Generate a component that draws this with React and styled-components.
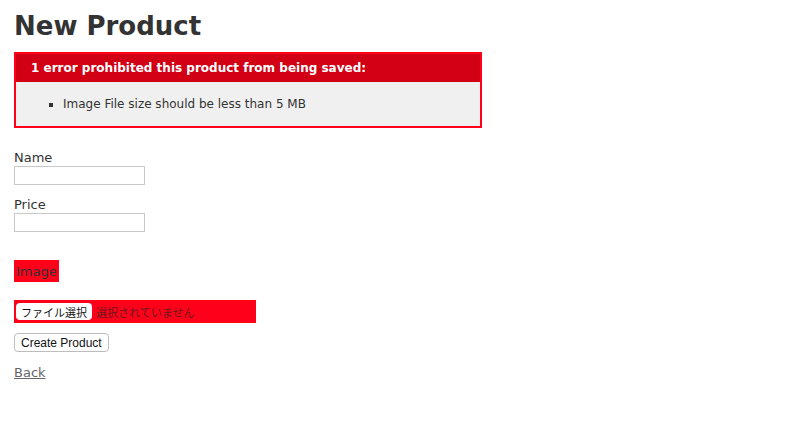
import styled, { createGlobalStyle } from 'styled-components';

const GlobalStyle = createGlobalStyle`
  body {
    margin: 0;
    background: #fff;
    color: #333;
    font-family: "DejaVu Sans", Verdana, "Noto Sans CJK JP", sans-serif;
    font-size: 13px;
    line-height: 18px;
  }
`

const Page = styled.div`
  padding: 17px 14px;
`

const Title = styled.h1`
  margin: 0 0 17px;
  font-size: 26px;
  font-weight: bold;
  line-height: 18px;
`

const ErrorBox = styled.div`
  width: 450px;
  border: 2px solid #ff001a;
  padding: 7px 7px 0;
  margin-bottom: 20px;
  background-color: #f0f0f0;
`

const ErrorTitle = styled.h2`
  margin: -7px -7px 0;
  padding: 5px 5px 5px 15px;
  font-size: 12px;
  font-weight: bold;
  background-color: #d20014;
  color: #fff;
`

const ErrorList = styled.ul`
  margin: 13px 0;
  padding-left: 40px;
  li {
    font-size: 12px;
    list-style: square;
  }
`

const Field = styled.div`
  margin-bottom: ${p => p.$gap || 10}px;
  margin-top: ${p => p.$top || 0}px;
`

const Label = styled.label`
  display: block;
  padding-top: 1px;
  margin-bottom: -1px;
`

const TextInput = styled.input`
  display: block;
  box-sizing: border-box;
  width: 131px;
  height: 19px;
  margin: 0;
  padding: 1px 2px;
  border: 1px solid #c8c8c8;
  font-size: 13px;
`

const WithErrors = styled.div`
  display: table;
  padding: 2px;
  background-color: #ff001a;
`

const FileRow = styled.div`
  display: flex;
  align-items: center;
  box-sizing: border-box;
  width: 242px;
  height: 23px;
  padding: 2px;
  background-color: #ff001a;
`

const FileButton = styled.span`
  box-sizing: border-box;
  height: 17px;
  padding: 0 5px;
  display: inline-flex;
  align-items: center;
  background: #fff;
  border-radius: 4px;
  color: #111;
  font-family: "Noto Sans CJK JP", sans-serif;
  font-size: 11px;
  margin-right: 4px;
`

const FileStatus = styled.span`
  font-family: "Noto Sans CJK JP", sans-serif;
  font-size: 11px;
  color: #6a1a1a;
`

const Button = styled.button`
  box-sizing: border-box;
  height: 19px;
  padding: 0 6px;
  background: #fff;
  border: 1px solid #bdbdbd;
  border-radius: 4px;
  font-family: "Liberation Sans", Arial, sans-serif;
  font-size: 12px;
  color: #111;
`

const BackLink = styled.a`
  display: inline-block;
  margin-top: 2px;
  color: #666;
  text-decoration: underline;
`

export default function App() {
  return (
    <>
      <GlobalStyle />
      <Page>
        <Title>New Product</Title>

        <ErrorBox>
          <ErrorTitle>1 error prohibited this product from being saved:</ErrorTitle>
          <ErrorList>
            <li>Image File size should be less than 5 MB</li>
          </ErrorList>
        </ErrorBox>

        <form onSubmit={e => e.preventDefault()}>
          <Field>
            <Label>Name</Label>
            <TextInput type="text" />
          </Field>
          <Field>
            <Label>Price</Label>
            <TextInput type="text" />
          </Field>
          <Field $top={28} $gap={18}>
            <WithErrors>
              <Label>Image</Label>
            </WithErrors>
          </Field>
          <Field>
            <FileRow>
              <FileButton>ファイル選択</FileButton>
              <FileStatus>選択されていません</FileStatus>
            </FileRow>
          </Field>
          <Field>
            <Button type="submit">Create Product</Button>
          </Field>
        </form>

        <BackLink href="#">Back</BackLink>
      </Page>
    </>
  )
}
